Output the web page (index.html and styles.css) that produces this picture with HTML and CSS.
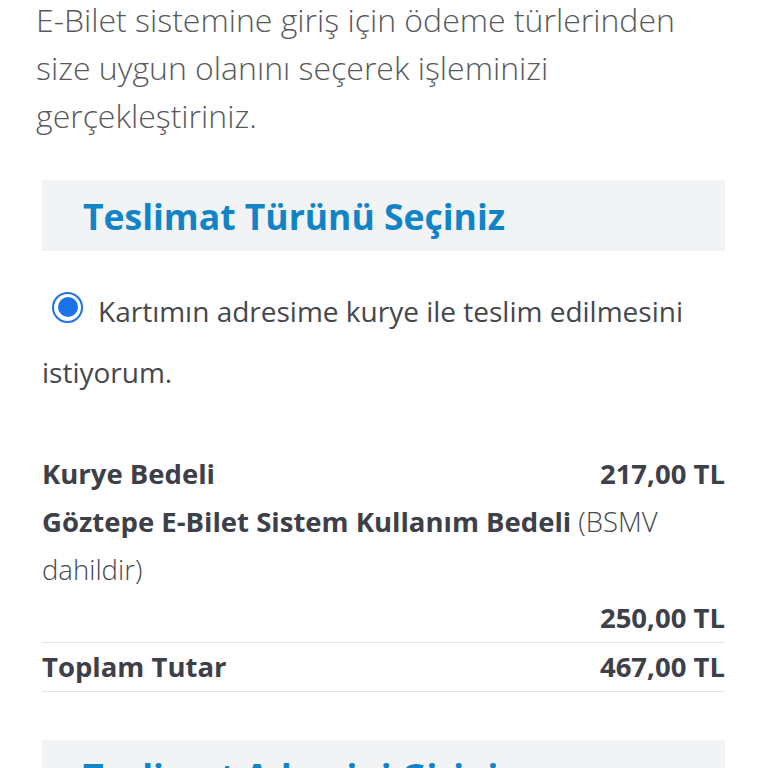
FILE: index.html
```html
<!DOCTYPE html>
<html lang="tr">
<head>
<meta charset="utf-8">
<link rel="stylesheet" href="styles.css">
</head>
<body>
<main class="page">
  <p class="intro">E-Bilet sistemine giriş için ödeme türlerinden size uygun olanını seçerek işleminizi gerçekleştiriniz.</p>

  <section class="panel">
    <h2 class="panel-title">Teslimat Türünü Seçiniz</h2>
  </section>

  <label class="option">
    <span class="radio"><span class="radio-dot"></span></span>Kartımın adresime kurye ile teslim edilmesini istiyorum.
  </label>

  <div class="fees">
    <div class="fee-row">
      <span class="fee-label">Kurye Bedeli</span>
      <span class="fee-value">217,00 TL</span>
    </div>
    <div class="fee-block">
      <div class="fee-desc"><b>Göztepe E-Bilet Sistem Kullanım Bedeli</b> (BSMV dahildir)</div>
      <div class="fee-value right">250,00 TL</div>
    </div>
    <div class="fee-row total">
      <span class="fee-label">Toplam Tutar</span>
      <span class="fee-value">467,00 TL</span>
    </div>
  </div>

  <section class="panel next">
    <h2 class="panel-title">Teslimat Adresini Giriniz</h2>
  </section>
</main>
</body>
</html>
```

FILE: styles.css
```css
html, body {
  margin: 0;
  padding: 0;
  background: #ffffff;
  overflow: hidden;
}
body {
  font-family: "Open Sans", "Noto Sans", sans-serif;
  color: #3d4048;
}
.page {
  width: 683px;
  margin: -4px 0 0 42px;
}
.intro {
  margin: 0 0 0 -6px;
  font-weight: 300;
  font-size: 32px;
  line-height: 48px;
  color: #58595c;
}
.panel {
  margin-top: 40px;
  height: 71px;
  background: #f2f3f5;
  display: flex;
  align-items: center;
  padding-left: 41px;
}
.panel-title {
  margin: 0;
  font-size: 35.5px;
  font-weight: 700;
  color: #1183c7;
  line-height: 40px;
}
.option {
  display: block;
  margin-top: 30px;
  font-size: 28px;
  line-height: 61px;
  color: #45474d;
}
.radio {
  display: inline-flex;
  align-items: center;
  justify-content: center;
  box-sizing: border-box;
  width: 31px;
  height: 31px;
  border: 2.5px solid #1a73e8;
  border-radius: 50%;
  margin: 0 15px 0 10px;
  vertical-align: -3px;
  position: relative;
  top: -8px;
}
.radio-dot {
  width: 20px;
  height: 20px;
  border-radius: 50%;
  background: #1a73e8;
}
.fees {
  margin-top: 47px;
  font-size: 27.5px;
}
.fee-row {
  display: flex;
  justify-content: space-between;
  line-height: 48px;
}
.fee-label, .fee-value, .fee-desc b {
  font-weight: 700;
}
.fee-block {
  line-height: 48px;
  border-bottom: 1.5px solid #e2e3e6;
}
.fee-desc {
  font-weight: 300;
  color: #45474d;
}
.fee-desc b {
  color: #3d4048;
}
.right {
  text-align: right;
}
.total {
  border-bottom: 1.5px solid #e2e3e6;
}
.panel.next {
  margin-top: 48px;
}
```
